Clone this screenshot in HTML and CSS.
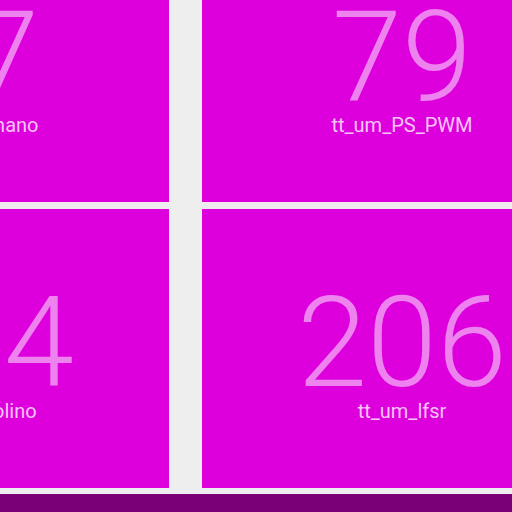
FILE: index.html
```html
<!DOCTYPE html>
<html>
<head>
<meta charset="utf-8">
<link rel="stylesheet" href="styles.css">
</head>
<body>
<div class="page">
  <div class="grid">
    <div class="tile"><div class="count">57</div><div class="name">tt_um_kiwihano</div></div>
    <div class="tile"><div class="count">79</div><div class="name">tt_um_PS_PWM</div></div>
    <div class="tile"><div class="count">104</div><div class="name">tt_um_krisolino</div></div>
    <div class="tile"><div class="count">206</div><div class="name">tt_um_lfsr</div></div>
  </div>
  <div class="footer"></div>
</div>
</body>
</html>
```
FILE: styles.css
```css
html, body {
  margin: 0;
  padding: 0;
  background: #eeeeee;
  overflow: hidden;
  width: 512px;
  height: 512px;
}
.page {
  margin-left: -231px;
  margin-top: -77px;
  display: flex;
  flex-direction: column;
  gap: 6px;
  width: 1100px;
}
.grid {
  display: grid;
  grid-template-columns: 400px 400px;
  grid-auto-rows: 279px;
  column-gap: 33px;
  row-gap: 7px;
}
.tile {
  background: #dd00dd;
  display: flex;
  flex-direction: column;
  align-items: center;
  padding-top: 79px;
  box-sizing: border-box;
  font-family: Roboto, "Noto Sans", sans-serif;
}
.count {
  font-size: 126px;
  font-weight: 300;
  line-height: 111px;
  color: #ee82ee;
  white-space: nowrap;
}
.name {
  font-size: 20px;
  line-height: 24px;
  color: #f8c4f8;
  white-space: nowrap;
}
.footer {
  height: 60px;
  background: #7a0078;
}
```
